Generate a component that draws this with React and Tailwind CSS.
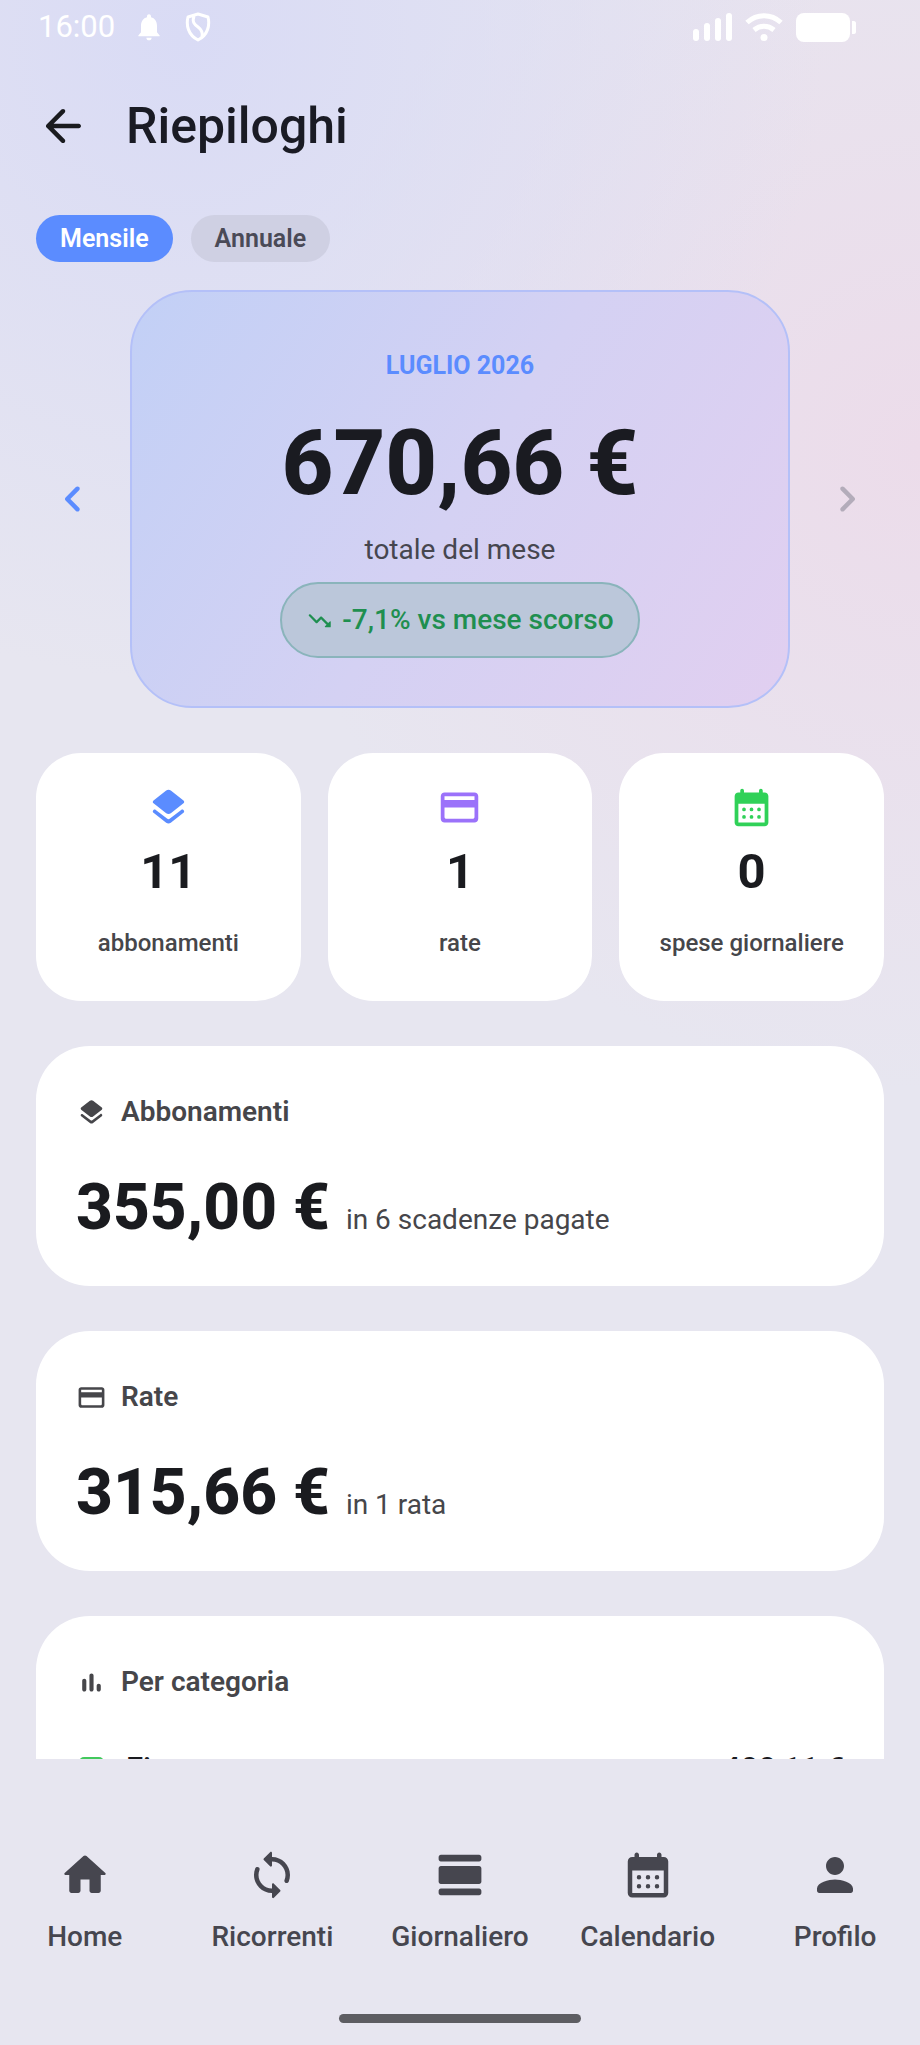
const paths = {
  back: 'M19 11H7.83l4.88-4.88c.39-.39.39-1.03 0-1.42-.39-.39-1.02-.39-1.41 0l-6.59 6.59c-.39.39-.39 1.02 0 1.41l6.59 6.59c.39.39 1.02.39 1.41 0 .39-.39.39-1.02 0-1.41L7.83 13H19c.55 0 1-.45 1-1s-.45-1-1-1z',
  left: 'M14.71 6.71c-.39-.39-1.02-.39-1.41 0L8.71 11.3c-.39.39-.39 1.02 0 1.41l4.59 4.59c.39.39 1.02.39 1.41 0 .39-.39.39-1.02 0-1.41L10.83 12l3.88-3.88c.39-.39.38-1.03 0-1.41z',
  right: 'M9.29 6.71c-.39.39-.39 1.02 0 1.41L13.17 12l-3.88 3.88c-.39.39-.39 1.02 0 1.41.39.39 1.02.39 1.41 0l4.59-4.59c.39-.39.39-1.02 0-1.41L10.7 6.7c-.38-.38-1.02-.38-1.41.01z',
  layers: 'M12.6 18.06c-.36.28-.87.28-1.23 0l-6.15-4.78c-.36-.28-.86-.28-1.22 0-.51.4-.51 1.17 0 1.57l6.76 5.26c.72.56 1.73.56 2.46 0l6.76-5.26c.51-.4.51-1.17 0-1.57l-.01-.01c-.36-.28-.86-.28-1.22 0l-6.15 4.79zm.63-3.02l6.76-5.26c.51-.4.51-1.18 0-1.58l-6.76-5.26c-.72-.56-1.73-.56-2.46 0L4.01 8.21c-.51.4-.51 1.18 0 1.58l6.76 5.26c.72.56 1.74.56 2.46-.01z',
  card: 'M20 4H4c-1.11 0-1.99.89-1.99 2L2 18c0 1.11.89 2 2 2h16c1.11 0 2-.89 2-2V6c0-1.11-.89-2-2-2zm-1 14H5c-.55 0-1-.45-1-1v-5h16v5c0 .55-.45 1-1 1zm1-10H4V6h16v2z',
  calendar: 'M19 4h-1V3c0-.55-.45-1-1-1s-1 .45-1 1v1H8V3c0-.55-.45-1-1-1s-1 .45-1 1v1H5c-1.11 0-1.99.9-1.99 2L3 20c0 1.1.89 2 2 2h14c1.1 0 2-.9 2-2V6c0-1.1-.9-2-2-2zm0 16H5V10h14v10zM7 13a1 1 0 1 0 2 0 1 1 0 1 0-2 0zm4 0a1 1 0 1 0 2 0 1 1 0 1 0-2 0zm4 0a1 1 0 1 0 2 0 1 1 0 1 0-2 0zM7 17a1 1 0 1 0 2 0 1 1 0 1 0-2 0zm4 0a1 1 0 1 0 2 0 1 1 0 1 0-2 0zm4 0a1 1 0 1 0 2 0 1 1 0 1 0-2 0z',
  chart: 'M6.4 9c.88 0 1.6.72 1.6 1.6v6.8c0 .88-.72 1.6-1.6 1.6s-1.600-.72-1.600-1.600v-6.800C4.800 9.720 5.520 9 6.400 9zM12 5c.88 0 1.600.72 1.600 1.600v10.800c0 .88-.72 1.600-1.600 1.600s-1.600-.72-1.600-1.600V6.600C10.400 5.720 11.120 5 12 5zm5.600 8c.88 0 1.600.72 1.600 1.600v2.800c0 .88-.72 1.600-1.600 1.600s-1.600-.72-1.600-1.600v-2.800c0-.88.72-1.600 1.600-1.600z',
  down: 'M16.85 17.15l1.44-1.44-4.88-4.88-3.29 3.29c-.39.39-1.02.39-1.41 0l-6-6.01a.996.996 0 1 1 1.41-1.41L9.41 12l3.29-3.29c.39-.39 1.02-.39 1.41 0l5.59 5.58 1.44-1.44a.5.5 0 0 1 .85.35v4.29c0 .28-.22.5-.5.5h-4.29c-.44.01-.66-.53-.35-.84z',
  home: 'M10 19v-5h4v5c0 .55.45 1 1 1h3c.55 0 1-.45 1-1v-7h1.7c.46 0 .68-.57.33-.87L12.67 3.6c-.38-.34-.96-.34-1.34 0l-8.36 7.53c-.34.3-.13.87.33.87H5v7c0 .55.45 1 1 1h3c.55 0 1-.45 1-1z',
  sync: 'M12 4V2.21c0-.45-.54-.67-.85-.35l-2.8 2.79c-.2.2-.2.51 0 .71l2.79 2.79c.32.31.86.09.86-.36V6c3.31 0 6 2.69 6 6 0 .79-.15 1.56-.44 2.25-.15.36-.04.77.23 1.04.51.51 1.37.33 1.64-.34.37-.91.57-1.91.57-2.95 0-4.42-3.58-8-8-8zm0 14c-3.31 0-6-2.69-6-6 0-.79.15-1.56.44-2.25.15-.36.04-.77-.23-1.04-.51-.51-1.37-.33-1.64.34C4.2 9.96 4 10.96 4 12c0 4.42 3.58 8 8 8v1.79c0 .45.54.67.85.35l2.79-2.79c.2-.2.2-.51 0-.71l-2.79-2.79c-.31-.31-.85-.09-.85.36V18z',
  day: 'M3.500 3h17c.55 0 1 .45 1 1v1c0 .55-.45 1-1 1h-17c-.55 0-1-.45-1-1V4c0-.55.45-1 1-1zM3.500 8h17c.55 0 1 .45 1 1v6c0 .55-.45 1-1 1h-17c-.55 0-1-.45-1-1V9c0-.55.45-1 1-1zM3.500 18h17c.55 0 1 .45 1 1v1c0 .55-.45 1-1 1h-17c-.55 0-1-.45-1-1v-1c0-.55.45-1 1-1z',
  person: 'M12 12c2.21 0 4-1.79 4-4s-1.79-4-4-4-4 1.790-4 4 1.790 4 4 4zm0 2c-2.670 0-8 1.340-8 4v1c0 .55.45 1 1 1h14c.55 0 1-.45 1-1v-1c0-2.660-5.330-4-8-4z',
  bell: 'M12 22c1.1 0 2-.9 2-2h-4c0 1.1.89 2 2 2zm6-6v-5c0-3.07-1.64-5.64-4.5-6.32V4c0-.83-.67-1.500-1.500-1.500s-1.500.67-1.500 1.500v.68C7.630 5.360 6 7.920 6 11v5l-2 2.300V19h16v-.7z',
};

const Icon = ({ name, className }) => (
  <svg viewBox="0 0 24 24" fill="currentColor" aria-hidden="true" className={className}>
    <path d={paths[name]} />
  </svg>
);

const stats = [
  { icon: 'layers', value: '11', label: 'abbonamenti', color: 'text-[#5b8cff]' },
  { icon: 'card', value: '1', label: 'rate', color: 'text-[#9b72fa]' },
  { icon: 'calendar', value: '0', label: 'spese giornaliere', color: 'text-[#30d158]' },
];

const sections = [
  { icon: 'layers', title: 'Abbonamenti', amount: '355,00 €', detail: 'in 6 scadenze pagate' },
  { icon: 'card', title: 'Rate', amount: '315,66 €', detail: 'in 1 rata' },
];

const tabs = [
  { icon: 'home', label: 'Home' },
  { icon: 'sync', label: 'Ricorrenti' },
  { icon: 'day', label: 'Giornaliero' },
  { icon: 'calendar', label: 'Calendario' },
  { icon: 'person', label: 'Profilo' },
];

const StatusBar = () => (
  <div className="flex h-[54px] flex-none items-center justify-between pr-[64px] pl-[38px] text-white">
    <div className="flex items-center">
      <span className="text-[31px] leading-9">16:00</span>
      <Icon name="bell" className="ml-[18px] size-8" />
      <svg viewBox="0 0 26 30" fill="none" stroke="currentColor" strokeWidth="3" strokeLinejoin="round" aria-hidden="true" className="ml-[20px] h-[30px] w-[26px]">
        <path d="M13 2 23 5 C25 13 23 23 13 28 C3 23 1 13 3 5Z" />
        <path d="M9 4C7 10 9 12 13 15 C17 18 18 21 17 25" />
      </svg>
    </div>
    <div className="flex items-center">
      <svg viewBox="0 0 40 28" fill="currentColor" aria-hidden="true" className="h-7 w-10">
        <rect x="0" y="16" width="6" height="12" rx="3" />
        <rect x="11" y="10" width="6" height="18" rx="3" />
        <rect x="22" y="5" width="6" height="23" rx="3" />
        <rect x="33" y="0" width="6" height="28" rx="3" />
      </svg>
      <svg viewBox="0 0 38 28" fill="none" stroke="currentColor" strokeWidth="5" aria-hidden="true" className="ml-[12px] h-7 w-[38px]">
        <path d="M2 9.5C12 .5 26 .5 36 9.5" />
        <path d="M9 17C15 12 23 12 29 17" />
        <circle cx="19" cy="24.5" r="3.5" fill="currentColor" stroke="none" />
      </svg>
      <svg viewBox="0 0 60 29" fill="currentColor" aria-hidden="true" className="ml-[13px] h-[29px] w-[60px]">
        <rect x="0" y="0" width="54" height="29" rx="8" />
        <path d="M56 8h2c1 0 2 1 2 2v9c0 1-1 2-2 2h-2z" />
      </svg>
    </div>
  </div>
);

const PeriodCard = () => (
  <div className="flex items-center">
    <button aria-label="Mese precedente" className="flex-none pr-[30px] pl-[10px] text-[#5b8cff]">
      <Icon name="left" className="size-[54px]" />
    </button>
    <div className="flex flex-1 flex-col items-center rounded-[62px] border-2 border-[#b4c0f8] bg-linear-[122deg] from-[#c2d0f6] via-[#d4d1f3] to-[#e1cff0] pt-[56px] pb-[48px]">
      <p className="text-[25px] leading-9 font-bold text-[#5b8cff]">LUGLIO 2026</p>
      <p className="mt-[22px] text-[90px] leading-[116px] font-extrabold text-[#1a1b21]">670,66 €</p>
      <p className="mt-[10px] text-[28px] leading-9 text-[#46464f]">totale del mese</p>
      <p className="mt-[14px] flex h-[76px] items-center rounded-full border-2 border-[#8ab4bb] bg-[#bbc7da] px-[24px] text-[28px] font-medium text-[#1f8f50]">
        <Icon name="down" className="mr-[9px] size-[27px]" />
        -7,1% vs mese scorso
      </p>
    </div>
    <button aria-label="Mese successivo" disabled className="flex-none pr-[10px] pl-[30px] text-[#b3acba]">
      <Icon name="right" className="size-[54px]" />
    </button>
  </div>
);

const SectionTitle = ({ icon, children }) => (
  <h2 className="flex items-center gap-[14px] text-[28px] leading-9 font-semibold text-[#46464a]">
    <Icon name={icon} className="size-[31px]" />
    {children}
  </h2>
);

const App = () => {
  return (
    <div className="flex h-screen flex-col overflow-hidden bg-[#e7e6f0] bg-[radial-gradient(circle_at_20%_2%,#d9dbf5_0%,#d9dbf500_640px),radial-gradient(circle_at_100%_22%,#ecdcea_0%,#ecdcea00_640px)] font-[Roboto,sans-serif] text-[#1a1b1f]">
      <StatusBar />

      <header className="flex h-[144px] flex-none items-center gap-[36px] pl-[36px]">
        <button aria-label="Indietro" className="flex">
          <Icon name="back" className="size-[54px]" />
        </button>
        <h1 className="text-[50px] leading-[60px] font-medium text-[#1a1b24]">Riepiloghi</h1>
      </header>

      <main className="flex min-h-0 flex-1 flex-col gap-[45px] overflow-hidden px-[36px] pt-[17px]">
        <div className="flex flex-none flex-col gap-[28px]">
          <div className="flex gap-[18px]">
            <button className="h-[47px] rounded-full bg-[#5b8cff] px-6 text-[25px] font-semibold text-white">Mensile</button>
            <button className="h-[47px] rounded-full bg-[#cfd0e3] px-6 text-[25px] font-semibold text-[#4a4a57]">Annuale</button>
          </div>
          <PeriodCard />
        </div>

        <div className="grid flex-none grid-cols-3 gap-[27px]">
          {stats.map((stat) => (
            <div key={stat.label} className="flex flex-col items-center rounded-[45px] bg-white pt-[32px] pb-[40px]">
              <Icon name={stat.icon} className={`size-[45px] ${stat.color}`} />
              <p className="mt-[12px] text-[49px] leading-[60px] font-bold">{stat.value}</p>
              <p className="mt-[23px] text-[24px] leading-9 font-medium text-[#46464a]">{stat.label}</p>
            </div>
          ))}
        </div>

        {sections.map((section) => (
          <section key={section.title} className="flex-none rounded-[54px] bg-white px-[40px] pt-[48px] pb-[38px]">
            <SectionTitle icon={section.icon}>{section.title}</SectionTitle>
            <p className="mt-[38px] flex items-baseline gap-[16px]">
              <span className="text-[64px] leading-[80px] font-extrabold">{section.amount}</span>
              <span className="text-[28px] leading-9 text-[#46464a]">{section.detail}</span>
            </p>
          </section>
        ))}

        <section className="flex-none rounded-[54px] bg-white px-[40px] pt-[48px] pb-[48px]">
          <SectionTitle icon="chart">Per categoria</SectionTitle>
          <div className="mt-[49px] flex items-center text-[31px] leading-10 font-medium">
            <span className="ml-[3px] size-[25px] rounded-[5px] bg-[#42c95d]" />
            <span className="ml-[22px] flex-1">Finanza</span>
            <span className="font-semibold">400,11 €</span>
          </div>
        </section>
      </main>

      <nav className="flex h-[286px] flex-none flex-col">
        <div className="flex gap-[18px] pt-[89px]">
          {tabs.map((tab) => (
            <a key={tab.label} href="#" className="flex flex-1 basis-0 flex-col items-center gap-[17px] text-[28px] leading-9 font-medium text-[#46464f]">
              <Icon name={tab.icon} className="size-[54px]" />
              {tab.label}
            </a>
          ))}
        </div>
        <div className="mx-auto mt-auto mb-[22px] h-[9px] w-[242px] rounded-full bg-[#5d5d62]" />
      </nav>
    </div>
  );
};

export default App;
